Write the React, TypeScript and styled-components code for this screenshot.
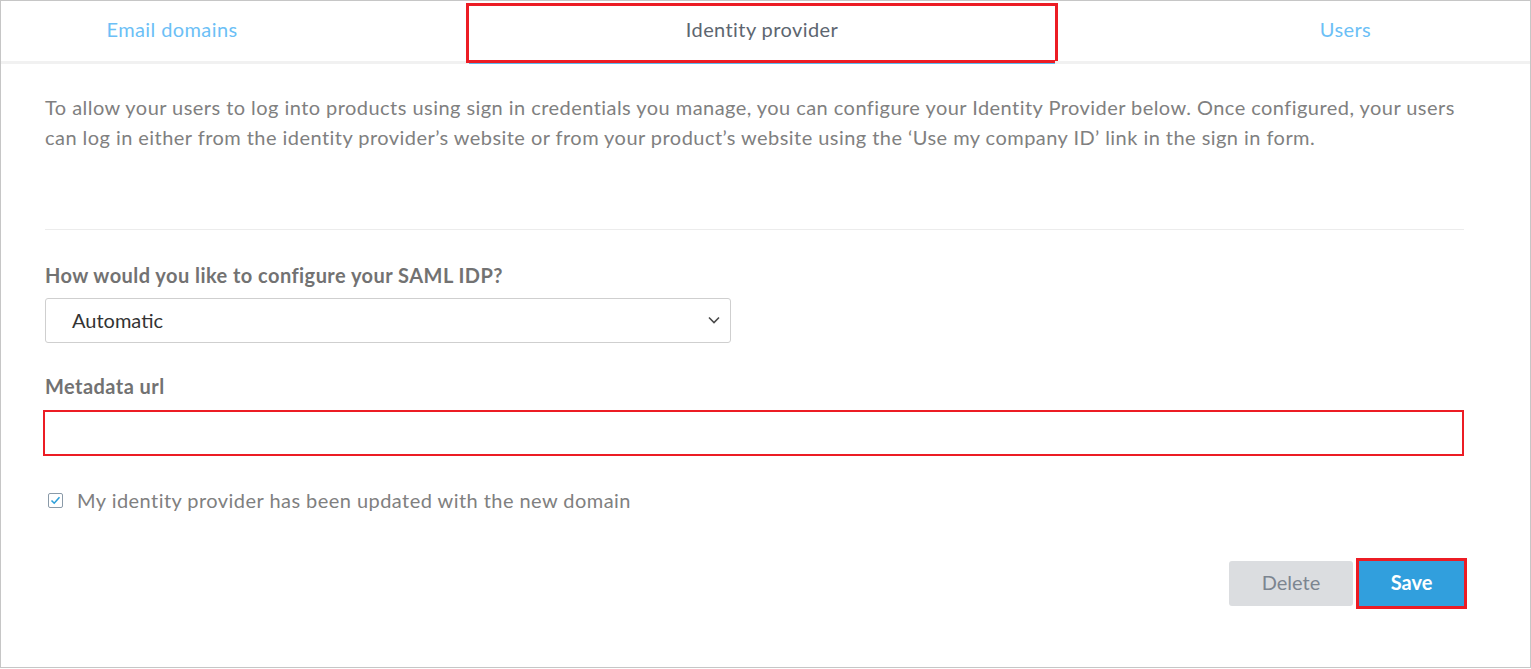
import * as React from 'react';
import styled, { createGlobalStyle } from 'styled-components';

const GlobalStyle = createGlobalStyle`
  html, body {
    margin: 0;
    padding: 0;
    background: #ffffff;
  }

  body {
    font-family: Lato, 'Open Sans', 'Liberation Sans', sans-serif;
  }
`;

const Frame = styled.div`
  box-sizing: border-box;
  width: 1531px;
  height: 668px;
  border: 1px solid #c6c6c6;
  background: #ffffff;
`;

const TabBar = styled.div`
  display: grid;
  grid-template-columns: 468px 586px 1fr;
`;

const Tab = styled.div<{ $active?: boolean; $padLeft?: number; $padRight?: number }>`
  position: relative;
  box-sizing: border-box;
  height: 63px;
  display: flex;
  align-items: center;
  justify-content: center;
  padding-left: ${(p) => p.$padLeft ?? 0}px;
  padding-right: ${(p) => p.$padRight ?? 0}px;
  padding-bottom: 4px;
  border-bottom: 3px solid ${(p) => (p.$active ? '#5db9ee' : '#f1f1f1')};
  font-size: 20px;
  letter-spacing: 0.4px;
  color: ${(p) => (p.$active ? '#5d6670' : '#6cbff6')};
  cursor: pointer;

  ${(p) =>
    p.$active &&
    `
    &::after {
      content: '';
      position: absolute;
      top: 2px;
      left: -3px;
      right: -3px;
      bottom: -2px;
      border: 3px solid #ec1c24;
      pointer-events: none;
    }
  `}
`;

const Content = styled.div`
  padding: 28px 66px 0 44px;
`;

const Intro = styled.p`
  margin: 0;
  font-size: 20px;
  letter-spacing: 0.45px;
  line-height: 30px;
  color: #808080;
`;

const Divider = styled.hr`
  margin: 77px 0 0;
  border: 0;
  border-top: 1px solid #ececec;
`;

const Label = styled.div<{ $top: number }>`
  margin-top: ${(p) => p.$top}px;
  font-size: 20px;
  letter-spacing: 0.45px;
  line-height: 24px;
  font-weight: 700;
  color: #727272;
`;

const SelectBox = styled.div`
  box-sizing: border-box;
  margin-top: 11px;
  width: 686px;
  height: 45px;
  display: flex;
  align-items: center;
  justify-content: space-between;
  padding: 0 8px 2px 26px;
  border: 1px solid #cfcfcf;
  border-radius: 3px;
  font-size: 20px;
  color: #333333;
`;

const UrlInput = styled.input`
  box-sizing: border-box;
  display: block;
  margin-top: 12px;
  margin-left: -2px;
  width: calc(100% + 2px);
  height: 46px;
  border: 2px solid #ec1c24;
  border-radius: 0;
  outline: none;
  font-family: inherit;
  font-size: 20px;
  padding: 0 12px;
`;

const CheckRow = styled.label`
  margin-top: 32px;
  display: flex;
  align-items: center;
  gap: 14px;
  height: 24px;
  font-size: 20px;
  letter-spacing: 0.45px;
  color: #808080;
`;

const Actions = styled.div`
  margin-top: 49px;
  display: flex;
  justify-content: flex-end;
  align-items: center;
  gap: 6px;
`;

const Button = styled.button<{ $primary?: boolean }>`
  box-sizing: border-box;
  height: 45px;
  width: ${(p) => (p.$primary ? 105 : 124)}px;
  padding: 0 0 4px;
  border: 0;
  border-radius: ${(p) => (p.$primary ? 0 : 3)}px;
  font-family: inherit;
  font-size: 20px;
  font-weight: ${(p) => (p.$primary ? 700 : 400)};
  background: ${(p) => (p.$primary ? '#319fdd' : '#dbdde0')};
  color: ${(p) => (p.$primary ? '#ffffff' : '#7c8590')};
  outline: ${(p) => (p.$primary ? '3px solid #ec1c24' : 'none')};
  cursor: pointer;
`;

const Chevron = () => (
  <svg width="16" height="16" viewBox="0 0 16 16" fill="none">
    <path d="M3 5.5 L8 10.5 L13 5.5" stroke="#4a4a4a" strokeWidth="1.6" />
  </svg>
);

const CheckIcon = () => (
  <svg width="15" height="15" viewBox="0 0 15 15" fill="none" style={{ marginLeft: 3 }}>
    <rect x="0.5" y="0.5" width="14" height="14" rx="1.5" stroke="#8a9aa8" />
    <path d="M3.5 7.5 L6.2 10.2 L11.5 4.2" stroke="#2c9fd9" strokeWidth="1.6" />
  </svg>
);

const App = () => {
  return (
    <>
      <GlobalStyle />
      <Frame>
        <TabBar>
          <Tab $padRight={126}>Email domains</Tab>
          <Tab $active>Identity provider</Tab>
          <Tab $padLeft={106}>Users</Tab>
        </TabBar>
        <Content>
          <Intro>
            To allow your users to log into products using sign in credentials you manage, you can configure your
            Identity Provider below. Once configured, your users can log in either from the identity provider’s
            website or from your product’s website using the ‘Use my company ID’ link in the sign in form.
          </Intro>
          <Divider />
          <Label $top={33}>How would you like to configure your SAML IDP?</Label>
          <SelectBox>
            <span>Automatic</span>
            <Chevron />
          </SelectBox>
          <Label $top={31}>Metadata url</Label>
          <UrlInput type="text" />
          <CheckRow>
            <CheckIcon />
            My identity provider has been updated with the new domain
          </CheckRow>
          <Actions>
            <Button>Delete</Button>
            <Button $primary>Save</Button>
          </Actions>
        </Content>
      </Frame>
    </>
  );
};

export default App;
